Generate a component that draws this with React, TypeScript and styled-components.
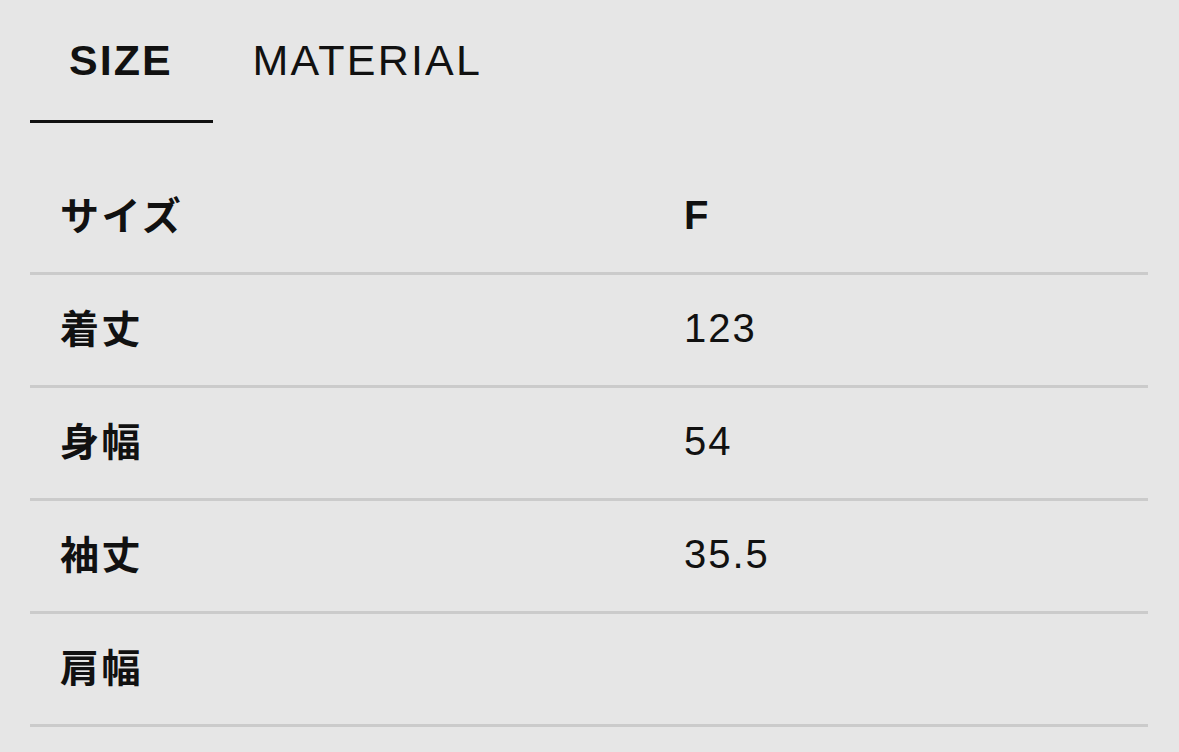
import React from "react";
import styled, { createGlobalStyle } from "styled-components";

const Global = createGlobalStyle`
  html, body { margin: 0; padding: 0; background: #e6e6e6; }
  body { font-family: "Liberation Sans", "Noto Sans CJK JP", sans-serif; color: #111; }
`;

const Page = styled.div`
  padding: 0 31px 0 30px;
  width: 1179px;
  box-sizing: border-box;
`;

const Tabs = styled.div`
  display: flex;
`;

const Tab = styled.div<{ $active?: boolean }>`
  height: 120px;
  line-height: 120px;
  padding: ${(p) => (p.$active ? "0 40px 0 39px" : "0 38px 0 40px")};
  font-size: 43px;
  letter-spacing: ${(p) => (p.$active ? "2px" : "2.2px")};
  font-weight: ${(p) => (p.$active ? 700 : 400)};
  border-bottom: 3px solid ${(p) => (p.$active ? "#111" : "transparent")};
  color: #111;
`;

const Table = styled.div`
  margin-top: 39px;
`;

const Row = styled.div`
  display: grid;
  grid-template-columns: 654px 1fr;
  align-items: center;
  height: 110px;
  border-bottom: 3px solid #cbcbcb;
`;

const Label = styled.div`
  padding: 0 0 9px 30px;
  font-family: "Noto Sans CJK JP", sans-serif;
  font-weight: 700;
  font-size: 39px;
  letter-spacing: 2.5px;
`;

const Value = styled.div<{ $bold?: boolean }>`
  padding-bottom: 4px;
  font-size: 40px;
  letter-spacing: 2px;
  font-weight: ${(p) => (p.$bold ? 700 : 400)};
`;

const rows: [string, string, boolean?][] = [
  ["サイズ", "F", true],
  ["着丈", "123"],
  ["身幅", "54"],
  ["袖丈", "35.5"],
  ["肩幅", ""],
];

export default function App() {
  return (
    <Page>
      <Global />
      <Tabs>
        <Tab $active>SIZE</Tab>
        <Tab>MATERIAL</Tab>
      </Tabs>
      <Table>
        {rows.map(([k, v, b]) => (
          <Row key={k}>
            <Label>{k}</Label>
            <Value $bold={b}>{v}</Value>
          </Row>
        ))}
      </Table>
    </Page>
  );
}
